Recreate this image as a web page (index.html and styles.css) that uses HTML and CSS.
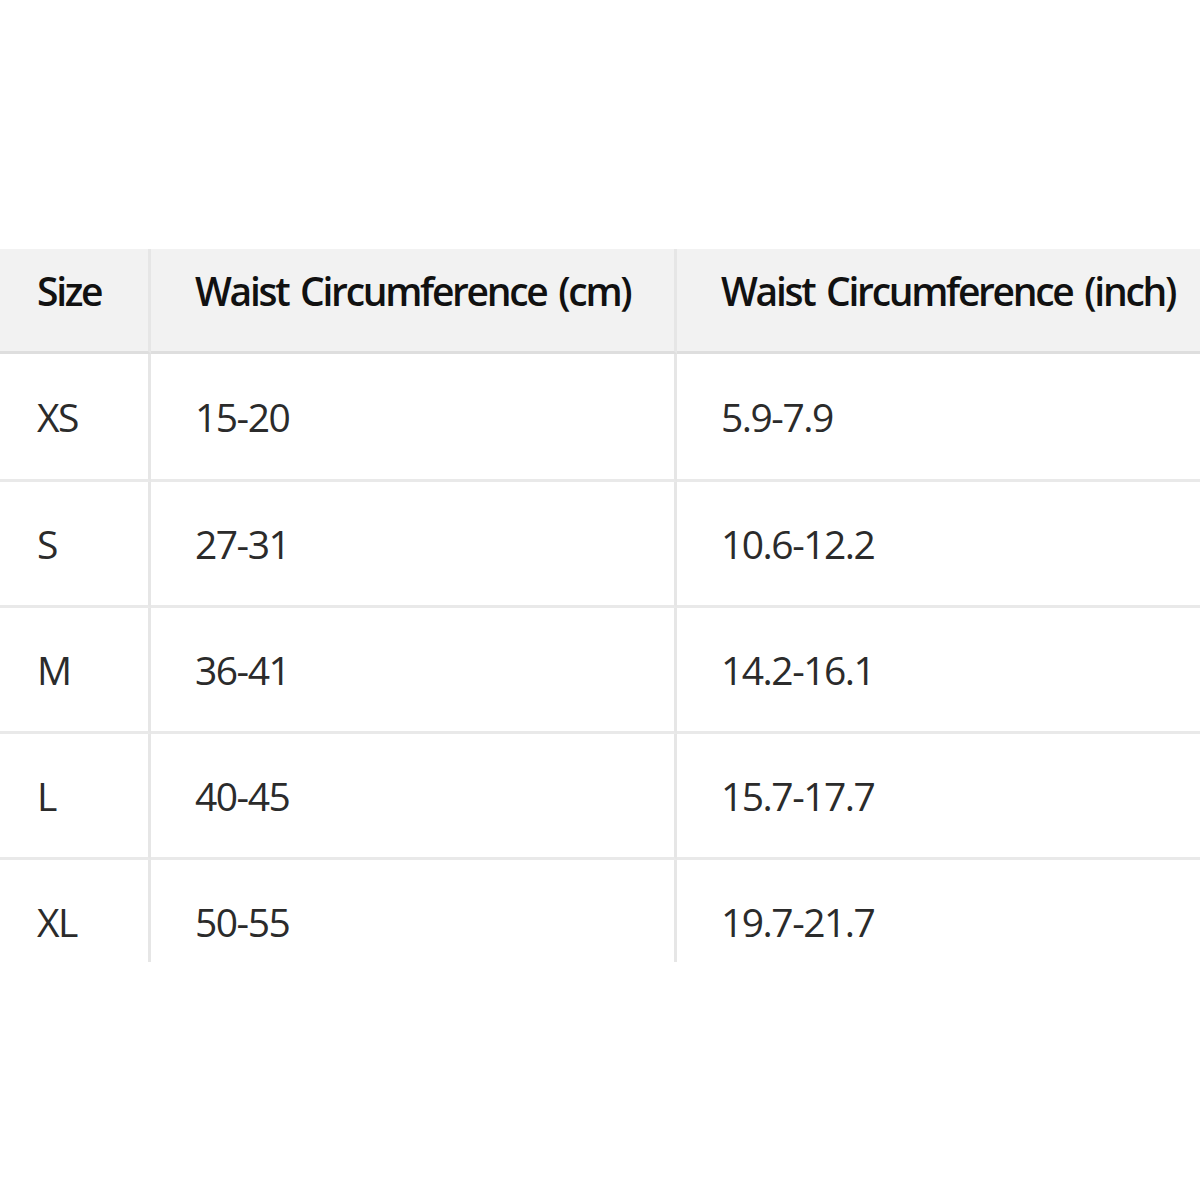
FILE: index.html
```html
<!DOCTYPE html>
<html lang="en">
<head>
<meta charset="utf-8">
<title>Size Chart</title>
<link rel="stylesheet" href="styles.css">
</head>
<body>
<div class="frame">
  <table class="chart">
    <colgroup>
      <col class="c-size">
      <col class="c-cm">
      <col class="c-inch">
    </colgroup>
    <thead>
      <tr>
        <th class="first">Size</th>
        <th>Waist Circumference (cm)</th>
        <th>Waist Circumference (inch)</th>
      </tr>
    </thead>
    <tbody>
      <tr class="row-first"><td class="first">XS</td><td>15-20</td><td>5.9-7.9</td></tr>
      <tr><td class="first">S</td><td>27-31</td><td>10.6-12.2</td></tr>
      <tr><td class="first">M</td><td>36-41</td><td>14.2-16.1</td></tr>
      <tr><td class="first">L</td><td>40-45</td><td>15.7-17.7</td></tr>
      <tr><td class="first">XL</td><td>50-55</td><td>19.7-21.7</td></tr>
    </tbody>
  </table>
</div>
</body>
</html>
```
FILE: styles.css
```css
html, body {
  margin: 0;
  padding: 0;
  background: #ffffff;
}

.frame {
  margin-top: 249px;
  width: 1200px;
  height: 713px;
  overflow: hidden;
}

.chart {
  border-collapse: separate;
  border-spacing: 0;
  table-layout: fixed;
  width: 1240px;
  font-family: "Open Sans", "Noto Sans", sans-serif;
  font-size: 39px;
}

.c-size { width: 151px; }
.c-cm { width: 526px; }
.c-inch { width: 563px; }

.chart th,
.chart td {
  text-align: left;
  white-space: nowrap;
  padding: 0 0 0 44px;
  border-right: 3px solid #e6e6e6;
  border-bottom: 3px solid #e9e9e9;
  vertical-align: middle;
  box-sizing: border-box;
}

.chart th.first,
.chart td.first {
  padding-left: 37px;
}

.chart th {
  height: 105px;
  background: #f2f2f2;
  color: #111111;
  font-weight: 600;
  letter-spacing: -2.3px;
  word-spacing: 4px;
  border-bottom-color: #dedede;
  padding-bottom: 20px;
}

.chart td {
  height: 126px;
  padding-top: 0;
  color: #2b2b2b;
  font-weight: 400;
  letter-spacing: -1.5px;
}

.chart .row-first td {
  height: 128px;
}
```
